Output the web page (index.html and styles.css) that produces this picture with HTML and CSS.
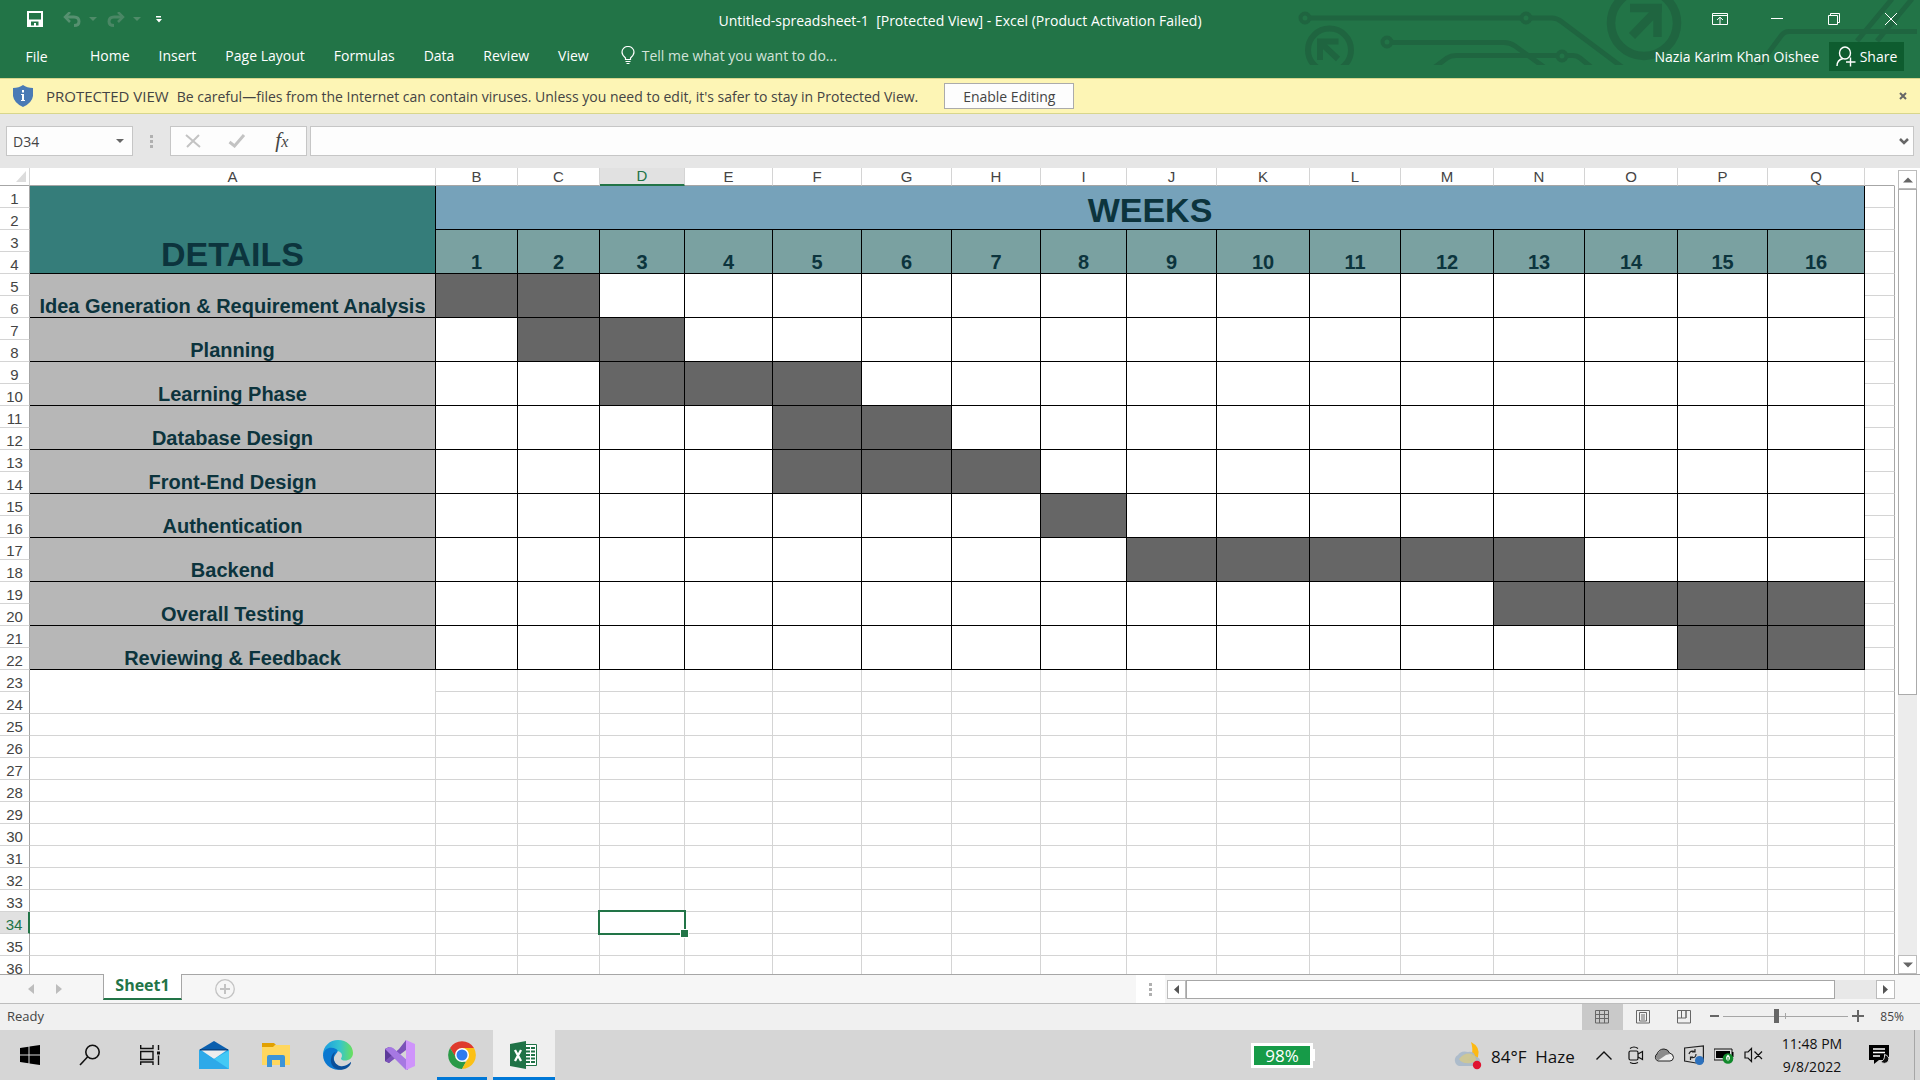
FILE: index.html
```html
<!DOCTYPE html>
<html lang="en">
<head>
<meta charset="utf-8">
<title>Untitled-spreadsheet-1 [Protected View] - Excel</title>
<link rel="stylesheet" href="styles.css">
</head>
<body>
<header class="app-header">
  <svg class="circuit" width="630" height="65" viewBox="0 0 630 65" fill="none" stroke="#1f6540" stroke-width="5" aria-hidden="true">
    <g stroke-width="4">
      <circle cx="15" cy="18" r="4.5"/><circle cx="236" cy="18" r="4.5"/><circle cx="97" cy="42" r="4.5"/><circle cx="272" cy="56" r="4.5"/>
    </g>
    <path d="M20 18H231M241 18H262Q267 18 272 22L332 67M102 42.500H214Q220 42.500 225 46L254 67M145 67L157 58Q161 55.500 166 55.500H267M277 55.500H283Q287 55.500 290 58L301 67M468 67L491 36Q494 31.500 499 31.500H627M567 41L602 -1M587 41L622 -1"/>
    <circle cx="39.500" cy="50" r="21.500" stroke-width="6"/>
    <path d="M27 41.500H48.500M30 39V60M31 43L48 59" stroke-width="6"/>
    <circle cx="354" cy="23" r="33" stroke-width="8.500"/>
    <path d="M340 8H372M367.500 4V37M368 9L342 36" stroke-width="8.500"/>
  </svg>
  <div class="title-row">
    <div class="quick-access">
      <button class="bare save" aria-label="Save"><svg width="16" height="16" viewBox="0 0 16 16"><path fill="#fff" fill-rule="evenodd" d="M0 0H16V16H0ZM2 2V8.500H14V2ZM4 10.500V14.500H7V12H9V14.500H11.500V10.500Z"/></svg></button>
      <button class="bare undo" aria-label="Undo"><svg width="18" height="15" viewBox="0 0 18 15" fill="none" stroke="#569070" stroke-width="3"><path d="M2 5H11Q16 5 16 9.500Q16 13.500 11 13.500"/><path d="M7 0L2 5L7 10" stroke-width="2.500"/></svg></button>
      <span class="caret faded"></span>
      <button class="bare redo" aria-label="Redo"><svg width="18" height="15" viewBox="0 0 18 15" fill="none" stroke="#4a8765" stroke-width="3"><path d="M16 5H7Q2 5 2 9.500Q2 13.500 7 13.500"/><path d="M11 0L16 5L11 10" stroke-width="2.500"/></svg></button>
      <span class="caret faded"></span>
      <button class="bare customize" aria-label="Customize toolbar"><svg width="6" height="7" viewBox="0 0 6 7"><path fill="#fff" d="M0 0H5V1.500H0ZM0 3H6L3 6.500Z"/></svg></button>
    </div>
    <h1 class="doc-title">Untitled-spreadsheet-1&nbsp; [Protected View] - Excel (Product Activation Failed)</h1>
    <div class="window-controls">
      <button class="bare" aria-label="Ribbon options"><svg width="16" height="12" viewBox="0 0 16 12" fill="none" stroke="#fff"><path d="M.5 .5H15.500V11.500H.5ZM.5 2.500H15.500M8 11V4.500M5 7L8 4.200L11 7"/></svg></button>
      <button class="bare" aria-label="Minimize"><svg width="12" height="12" viewBox="0 0 12 12"><path d="M0 5.500H12" stroke="#fff" stroke-width="1"/></svg></button>
      <button class="bare" aria-label="Restore"><svg width="12" height="12" viewBox="0 0 12 12" fill="none" stroke="#fff"><path d="M.5 2.500H9.500V11.500H.5ZM2.500 2.500V.5H11.500V9.500H9.500"/></svg></button>
      <button class="bare" aria-label="Close"><svg width="12" height="12" viewBox="0 0 12 12"><path d="M0 0L12 12M12 0L0 12" stroke="#fff"/></svg></button>
    </div>
  </div>
  <div class="ribbon-row">
    <nav class="ribbon-tabs">
      <button class="bare file">File</button>
      <button class="bare">Home</button>
      <button class="bare">Insert</button>
      <button class="bare">Page Layout</button>
      <button class="bare">Formulas</button>
      <button class="bare">Data</button>
      <button class="bare">Review</button>
      <button class="bare">View</button>
      <button class="bare tell-me"><svg width="14" height="18" viewBox="0 0 14 18" fill="none" stroke="#fff" stroke-width="1.200"><path d="M4.500 13.500V12Q1 9 1 6A6 5.500 0 0 1 13 6Q13 9 9.500 12V13.500ZM4.500 15.500H9.500M5.500 17.500H8.500"/></svg>Tell me what you want to do...</button>
    </nav>
    <div class="account">
      <span>Nazia Karim Khan Oishee</span>
      <button class="bare share"><svg width="20" height="21" viewBox="0 0 20 21" fill="none" stroke="#fff" stroke-width="1.400"><ellipse cx="9" cy="7" rx="5.500" ry="6"/><path d="M7 12.500Q1 14 1 20M10 16H19.500M14.500 11.500V20.500"/></svg>Share</button>
    </div>
  </div>
</header>

<section class="message-bar">
  <svg width="20" height="22" viewBox="0 0 20 22"><path fill="#4a7ab5" d="M10 0Q14 3 20 3V11Q19 18 10 22Q1 18 0 11V3Q6 3 10 0Z"/><path fill="#fff" d="M9 5H11V7.500H9ZM8 9H11V15H12V16H8V15H9V10H8Z"/></svg>
  <span class="message-kind">PROTECTED VIEW</span>
  <span class="message-text">Be careful—files from the Internet can contain viruses. Unless you need to edit, it's safer to stay in Protected View.</span>
  <button class="enable">Enable Editing</button>
  <button class="bare message-close" aria-label="Close message"><svg width="8" height="8" viewBox="0 0 8 8"><path d="M1 1L7 7M7 1L1 7" stroke="#666" stroke-width="2"/></svg></button>
</section>

<section class="formula-bar">
  <div class="name-box"><input type="text" value="D34" aria-label="Name box"><span class="caret"></span></div>
  <span class="grip"></span>
  <div class="formula-actions">
    <button class="bare" aria-label="Cancel"><svg width="16" height="14" viewBox="0 0 16 14"><path d="M1 1L15 13M14 1L2 13" stroke="#c3c3c3" stroke-width="2"/></svg></button>
    <button class="bare" aria-label="Enter"><svg width="18" height="14" viewBox="0 0 18 14"><path d="M1.500 8L6.500 12L16 1" fill="none" stroke="#c3c3c3" stroke-width="3"/></svg></button>
    <button class="bare fx" aria-label="Insert function">f<small>x</small></button>
  </div>
  <div class="formula-field"><input type="text" aria-label="Formula"><svg width="10" height="7" viewBox="0 0 10 7"><path d="M1 1L5 5L9 1" fill="none" stroke="#666" stroke-width="2.500"/></svg></div>
</section>

<main class="sheet-area">
  <div class="grid-view">
    <table class="grid">
      <colgroup id="columns"></colgroup>
      <thead><tr id="letters"></tr></thead>
      <tbody id="rows"></tbody>
    </table>
  </div>
  <div class="vscroll">
    <button class="scroll-btn" aria-label="Scroll up"><svg width="10" height="6" viewBox="0 0 10 6"><path fill="#666" d="M0 5.500L5 .5L10 5.500Z"/></svg></button>
    <div class="vtrack"><div class="vthumb"></div></div>
    <button class="scroll-btn" aria-label="Scroll down"><svg width="10" height="6" viewBox="0 0 10 6"><path fill="#666" d="M0 .5L5 5.500L10 .5Z"/></svg></button>
  </div>
</main>

<section class="tab-strip">
  <div class="tab-nav">
    <button class="bare" aria-label="Previous sheet"><svg width="6" height="10" viewBox="0 0 6 10"><path fill="#bdbdbd" d="M6 0V10L0 5Z"/></svg></button>
    <button class="bare" aria-label="Next sheet"><svg width="6" height="10" viewBox="0 0 6 10"><path fill="#bdbdbd" d="M0 0V10L6 5Z"/></svg></button>
  </div>
  <button class="sheet-tab">Sheet1</button>
  <button class="bare add-sheet" aria-label="New sheet"><svg width="20" height="20" viewBox="0 0 20 20" fill="none" stroke="#c3c3c3"><circle cx="10" cy="10" r="9.300" stroke-width="1.300"/><path d="M10 5V15M5 10H15" stroke-width="2"/></svg></button>
  <div class="splitter"><span class="grip"></span></div>
  <div class="hscroll">
    <button class="scroll-btn" aria-label="Scroll left"><svg width="5" height="9" viewBox="0 0 5 9"><path fill="#555" d="M5 0V9L0 4.500Z"/></svg></button>
    <div class="htrack"><div class="hthumb"></div></div>
    <button class="scroll-btn" aria-label="Scroll right"><svg width="5" height="9" viewBox="0 0 5 9"><path fill="#555" d="M0 0V9L5 4.500Z"/></svg></button>
  </div>
</section>

<section class="status-bar">
  <span class="ready">Ready</span>
  <div class="views">
    <button class="bare active" aria-label="Normal view"><svg width="14" height="14" viewBox="0 0 14 14" fill="none" stroke="#666"><path d="M.5 .5H13.500V13H.5ZM.5 4.500H13.500M.5 8.500H13.500M4.500 .5V13M9.500 .5V13"/></svg></button>
    <button class="bare" aria-label="Page layout view"><svg width="14" height="14" viewBox="0 0 14 14" fill="none" stroke="#666"><path d="M.5 .5H13.500V13H.5ZM3.500 2.500H10.500V11H3.500ZM5 5H9M5 7H9M5 9H9"/></svg></button>
    <button class="bare" aria-label="Page break view"><svg width="14" height="14" viewBox="0 0 14 14" fill="none" stroke="#666"><path d="M.5 .5H13.500V13H.5ZM4.500 .5V8H9V.5M.5 8H4.500M9 8V.5"/></svg></button>
  </div>
  <div class="zoom">
    <button class="bare" aria-label="Zoom out"><svg width="9" height="12" viewBox="0 0 9 12"><path d="M0 6H9" stroke="#666" stroke-width="2"/></svg></button>
    <input type="range" min="0" max="100" value="42" aria-label="Zoom">
    <button class="bare" aria-label="Zoom in"><svg width="12" height="12" viewBox="0 0 12 12"><path d="M0 6H12M6 0V12" stroke="#666" stroke-width="2"/></svg></button>
    <span class="zoom-value">85%</span>
  </div>
</section>

<footer class="taskbar">
  <div class="system-buttons">
    <button class="bare" aria-label="Start"><svg width="20" height="20" viewBox="0 0 20 20"><path d="M0 3L8.500 1.700V9.500H0ZM9.500 1.500L20 0V9.500H9.500ZM0 10.500H8.500V18.300L0 17ZM9.500 10.500H20V20L9.500 18.500Z"/></svg></button>
    <button class="bare" aria-label="Search"><svg width="22" height="22" viewBox="0 0 22 22" fill="none" stroke="#111" stroke-width="1.600"><circle cx="13.500" cy="8" r="6.700"/><path d="M8.700 12.800L1 21"/></svg></button>
    <button class="bare" aria-label="Task view"><svg width="20" height="20" viewBox="0 0 20 20" fill="none" stroke="#111" stroke-width="1.400"><path d="M.7 0V3.500H13V0M.7 6.500H13V14.500H.7ZM.7 20V17H13V20M18.500 0V5M18.500 10.500V20"/><path d="M17 6.500H20V9.500H17Z" fill="#111" stroke="none"/></svg></button>
  </div>
  <div class="apps">
    <button class="bare app" aria-label="Mail"><svg width="30" height="30" viewBox="0 0 30 30"><path fill="#0b5fae" d="M0 10L15 1L30 10V14H0Z"/><path fill="#2da9e9" d="M0 10H30V29H0Z"/><path fill="#eee" d="M2 10H28L15 19Z"/><path fill="#0a4584" d="M1 9H29V10.500H1Z"/><path fill="#2da9e9" d="M0 10.500L15 19L30 28.500V29H0Z"/><path fill="#43c9f5" d="M30 10.500V29L15 19Z"/></svg></button>
    <button class="bare app" aria-label="File Explorer"><svg width="28" height="24" viewBox="0 0 28 24"><path fill="#e2a000" d="M0 0H12L14 2V6H0Z"/><path fill="#ffd75f" d="M0 4H11L13 2H28V22H0Z"/><path fill="#3c94d8" d="M5 14Q5 12 7 12H21Q23 12 23 14V24H18V17H10V24H5Z"/></svg></button>
    <button class="bare app" aria-label="Edge"><svg width="30" height="30" viewBox="0 0 30 30"><defs><linearGradient id="edge-top" x1="0" x2="1"><stop offset="0" stop-color="#1a9be0"/><stop offset=".55" stop-color="#35c4cf"/><stop offset="1" stop-color="#6be05a"/></linearGradient></defs><path fill="url(#edge-top)" d="M0 15C0 6 7 0 15 0C24 0 30 6 30 13C30 18 26 20.500 22 20.500C18 20.500 17.500 18.500 18.500 17.500C20 15 18 11 14 11C8 8 3 10 0 15Z"/><path fill="#0b78d0" d="M0 15C1 8 8 6 13 9C18 12 10 14 11 20C12 25 17 28 20 29C10 32 0 25 0 15Z"/><path fill="#0c4f99" d="M12.500 12C9 16 10 24 17 26C22 27 26 24 27.500 22C29 22 27 28 20 29.500C12 31 7 25 8 19C8.500 15 10.500 12.500 12.500 12Z"/></svg></button>
    <button class="bare app" aria-label="Visual Studio"><svg width="30" height="30" viewBox="0 0 30 30"><path fill="#5c3a99" d="M0 9L4 7L11 15L4 23L0 21Z"/><path fill="#7a52b8" d="M21 0V10L4 23L0 21L14 9Z"/><path fill="#a678e2" d="M4 7L21 30L21 20L8 8Z"/><path fill="#a678e2" d="M0 9L4 7Q7 7 9 9L23 21V30Q21 30 19 28Z"/><path fill="#cf94fb" d="M21 0L30 4V26L21 30Z"/></svg></button>
    <button class="bare app running" aria-label="Chrome"><svg width="28" height="28" viewBox="0 0 28 28"><path fill="#df3a2d" d="M2 7A14 14 0 0 1 26 7H14L8 17Z"/><path fill="#2b9a47" d="M2 7L9 18L14 20L18 21L14 28A14 14 0 0 1 2 7Z"/><path fill="#fbc016" d="M14 7H26A14 14 0 0 1 14 28L20 17Z"/><circle cx="14" cy="14" r="7" fill="#fff"/><circle cx="14" cy="14" r="5.500" fill="#2f7bee"/></svg></button>
    <button class="bare app running current" aria-label="Excel"><svg width="28" height="28" viewBox="0 0 28 28"><path fill="#fff" stroke="#1f7246" d="M14 3.500H26.500V24.500H14Z"/><path fill="#1f7246" d="M16 6H20V8H16ZM21 6H25V8H21ZM16 9.500H20V11.500H16ZM21 9.500H25V11.500H21ZM16 13H20V15H16ZM21 13H25V15H21ZM16 16.500H20V18.500H16ZM21 16.500H25V18.500H21ZM16 20H20V22H16ZM21 20H25V22H21Z"/><path fill="#1f7246" d="M0 3L16 0V28L0 25Z"/><path d="M5 9L11 20M11 9L5 20" stroke="#fff" stroke-width="2.300"/></svg></button>
  </div>
  <div class="battery-meter"><span>98%</span></div>
  <div class="tray">
    <button class="bare weather"><svg width="30" height="28" viewBox="0 0 30 28"><path fill="#fdb913" d="M18 0Q28 5 25 15Q22 22 14 18Q22 13 18 0Z"/><path fill="#a9b9ca" opacity=".9" d="M6 24A6 6 0 0 1 5 13Q8 8 15 10Q21 9 22 14Q28 16 27 20Q26 24 22 24Z"/><path fill="#d5c98a" opacity=".8" d="M6 17Q14 8 22 14Q25 20 18 21Q8 22 6 17Z"/><circle cx="24" cy="23" r="4.200" fill="#e0142f"/></svg>84°F&nbsp; Haze</button>
    <div class="tray-icons">
      <button class="bare overflow" aria-label="Show hidden icons"><svg width="16" height="9" viewBox="0 0 16 9"><path d="M.5 8.500L8 1L15.500 8.500" fill="none" stroke="#111" stroke-width="1.400"/></svg></button>
      <button class="bare" aria-label="Meet now"><svg width="16" height="18" viewBox="0 0 16 18" fill="none" stroke="#111" stroke-width="1.200"><rect x="1" y="5" width="9" height="9" rx="1.500"/><path d="M10 8L14.500 5.500V13.500L10 11M2 2.500Q6 -.5 10 2.500M2 16.500Q6 18.500 10 16.500"/></svg></button>
      <button class="bare" aria-label="OneDrive"><svg width="20" height="14" viewBox="0 0 20 14"><path fill="#eee" d="M4 13A4 4 0 0 1 3 6Q5 1 10 1Q14 1 15.500 5Q19.500 6 19.500 9.500Q19 13 16 13Z"/><path fill="#8c8c8c" d="M2 10Q0 6 4 5.500Q6 1 10 1Q14 1 16 6L12 7L4 12.500Z"/><path fill="none" stroke="#222" d="M4 13A4 4 0 0 1 3 6Q5 1 10 1Q14 1 15.500 5Q19.500 6 19.500 9.500Q19 13 16 13Z"/></svg></button>
      <button class="bare" aria-label="Updates"><svg width="20" height="20" viewBox="0 0 20 20" fill="none" stroke="#222" stroke-width="1.200"><path d="M.6 3L19.400 .8V16L12 18L.6 16Z"/><path d="M5 9Q6 5 11 6.500M11 4V7H8M12 9Q12 13.500 7 12.500M6.500 15V12H9"/><circle cx="15.500" cy="15.500" r="4.500" fill="#2d71bd" stroke="none"/></svg></button>
      <button class="bare" aria-label="Battery"><svg width="20" height="18" viewBox="0 0 20 18"><path d="M0 3H18V14H0Z" fill="#ddd" stroke="#111"/><path d="M2 5H16V12H2Z"/><path d="M18 6H19.500V11H18Z"/><circle cx="14" cy="12.500" r="5.300" fill="#11892b"/><path d="M14 8.500Q18 12 14 15.500Q10 12 14 8.500Z" fill="#fff"/><path d="M14 11V17" stroke="#11892b"/></svg></button>
      <button class="bare" aria-label="Volume muted"><svg width="19" height="16" viewBox="0 0 19 16" fill="none" stroke="#111" stroke-width="1.200"><path d="M1 5H4L7.500 1.500V14.500L4 11H1ZM10.500 4.500L18 12M18 4.500L10.500 12"/></svg></button>
    </div>
    <button class="bare clock"><span>11:48 PM</span><span>9/8/2022</span></button>
    <button class="bare notifications" aria-label="Notifications"><svg width="21" height="20" viewBox="0 0 21 20"><path d="M0 0H20V15H10L5 19V15H0Z"/><path d="M4 4H16M4 7.500H16M4 11H11" stroke="#fff" stroke-width="1.500"/><path fill="#111" stroke="#ddd" d="M15.500 9.500Q21 11 19.500 16Q16 20.500 11.500 16.500Q16 15.500 15.500 9.500Z"/></svg></button>
    <span class="show-desktop"></span>
  </div>
</footer>
<script src="grid.js"></script>
</body>
</html>
```

FILE: styles.css
```css
* { box-sizing: border-box; }

body {
  margin: 0;
  height: 100vh;
  display: flex;
  flex-direction: column;
  overflow: hidden;
  background: #e6e6e6;
  color: #444;
  font-family: "Open Sans", "Noto Sans", sans-serif;
  font-size: 14px;
}

button, input { font: inherit; color: inherit; }
svg { display: block; flex: none; }

.bare {
  display: flex;
  align-items: center;
  justify-content: center;
  margin: 0;
  padding: 0;
  border: 0;
  background: none;
}

.caret {
  flex: none;
  border: 4px solid transparent;
  border-top-color: #666;
  border-bottom-width: 0;
}
.caret.faded { border-top-color: #4f8b69; }

.grip {
  width: 3px;
  height: 13px;
  background: repeating-linear-gradient(#b0b0b0 0 3px, transparent 3px 5px);
}

/* Title bar and ribbon */
.app-header {
  position: relative;
  flex: none;
  height: 78px;
  background: #227447;
  color: #fff;
}
.circuit { position: absolute; top: 0; right: 0; }
.title-row {
  position: relative;
  display: grid;
  grid-template-columns: 1fr auto 1fr;
  align-items: center;
  height: 38px;
}
.quick-access { display: flex; align-items: center; padding-left: 27px; }
.undo { margin-left: 20px; margin-right: 8px; }
.redo { margin-left: 10px; margin-right: 8px; }
.customize { margin-left: 15px; }
.doc-title { margin: 0; font-size: 14px; font-weight: 400; padding-top: 2px; }
.window-controls { display: flex; justify-content: flex-end; padding-right: 1px; }
.window-controls .bare { width: 57px; height: 38px; }
.ribbon-row {
  position: relative;
  display: flex;
  justify-content: space-between;
  align-items: center;
  height: 36px;
}
.ribbon-tabs { display: flex; align-items: center; gap: 29px; padding-bottom: 2px; }
.ribbon-tabs .file { width: 73px; margin-right: -12px; padding-top: 2px; }
.tell-me { gap: 7px; margin-left: 3px; color: #d3e3da; }
.account { display: flex; align-items: center; gap: 10px; padding-right: 16px; }
.share { gap: 4px; width: 75px; height: 29px; background: #0e5c2f; }

/* Protected view message */
.message-bar {
  flex: none;
  display: flex;
  align-items: center;
  height: 36px;
  padding: 0 13px;
  border-top: 1px solid #d8d68c;
  border-bottom: 1px solid #d8d68c;
  background: #fdf5b5;
}
.message-kind { margin-left: 13px; font-size: 15px; }
.message-text { margin-left: 8px; }
.enable {
  width: 130px;
  height: 26px;
  margin-left: 26px;
  padding: 0;
  border: 1px solid #ababab;
  background: #fdfdfd;
}
.message-close { margin-left: auto; }

/* Formula bar */
.formula-bar {
  flex: none;
  display: flex;
  align-items: center;
  height: 54px;
  padding: 0 6px;
}
.name-box, .formula-actions, .formula-field {
  display: flex;
  align-items: center;
  height: 30px;
  border: 1px solid #c6c6c6;
  background: #fdfdfd;
}
.name-box { width: 127px; padding-right: 8px; }
.name-box input, .formula-field input {
  flex: 1;
  min-width: 0;
  padding: 0 6px;
  border: 0;
  background: none;
}
.formula-bar .grip { margin: 0 17px; }
.formula-actions { width: 137px; justify-content: space-around; margin-right: 3px; padding-right: 2px; }
.formula-actions .bare { width: 40px; }
.formula-actions .fx {
  align-items: baseline;
  font-family: "Liberation Serif", serif;
  font-style: italic;
  font-size: 21px;
  line-height: 24px;
}
.fx small { font-size: 16px; }
.formula-field { flex: 1; padding-right: 4px; }

/* Worksheet */
.sheet-area {
  flex: 1;
  min-height: 0;
  display: flex;
  background: #fff;
  font-family: "Liberation Sans", Arial, sans-serif;
}
.grid-view { flex: 1; min-width: 0; overflow: hidden; }
.grid {
  width: 100%;
  table-layout: fixed;
  border-collapse: separate;
  border-spacing: 0;
}
.grid th, .grid td {
  height: 22px;
  padding: 0;
  border-right: 1px solid #d4d4d4;
  border-bottom: 1px solid #d4d4d4;
  text-align: center;
  vertical-align: bottom;
  line-height: normal;
  white-space: nowrap;
}
.grid th { font-weight: 400; font-size: 15px; color: #444; }
.grid thead th { height: 18px; line-height: 17px; border-bottom-color: #a6a6a6; }
.grid thead th:last-child { border-right-color: transparent; }
.grid tbody th { border-right-color: #a6a6a6; }
.grid td:last-child { border-right-color: #a6a6a6; }
.corner svg { margin: 0 3px 3px auto; }
.grid thead .selected {
  line-height: 16px;
  background: #e1e1e1;
  color: #227447;
  border-bottom: 2px solid #227447;
}
.grid tbody .selected {
  background: #e1e1e1;
  color: #227447;
  border-right: 2px solid #227447;
}
.grid .chart {
  border-color: #000;
  color: #0c343d;
  font-weight: 700;
  font-size: 20px;
  line-height: 21px;
}
.grid .details, .grid .weeks { font-size: 34px; line-height: 38px; }
.grid .details { background: #357d7a; }
.grid .weeks { background: #76a2ba; }
.grid .week { background: #7aa1a1; }
.grid .task { background: #b7b7b7; }
.grid .filled { background: #666; }
.grid .active { position: relative; }
.cursor {
  position: absolute;
  inset: -2px;
  border: 2px solid #227447;
}
.cursor::after {
  content: "";
  position: absolute;
  right: -5px;
  bottom: -5px;
  width: 7px;
  height: 7px;
  border: 1px solid #fff;
  background: #227447;
}

.scroll-btn {
  flex: none;
  display: flex;
  align-items: center;
  justify-content: center;
  width: 19px;
  height: 19px;
  padding: 0;
  border: 1px solid #bcbcbc;
  background: #fff;
}
.vscroll {
  flex: none;
  width: 25px;
  display: flex;
  flex-direction: column;
  align-items: center;
  padding-top: 2px;
}
.vtrack { flex: 1; width: 19px; background: #ececec; }
.vthumb { height: 66%; border: 1px solid #ababab; background: #fff; }

/* Sheet tabs */
.tab-strip {
  flex: none;
  display: flex;
  height: 29px;
  border-top: 1px solid #a6a6a6;
  background: #f6f6f6;
}
.tab-nav { width: 103px; display: flex; gap: 22px; padding-left: 28px; }
.sheet-tab {
  width: 79px;
  height: 26px;
  margin-top: -1px;
  padding: 0 0 2px;
  border: solid #a6a6a6;
  border-width: 0 1px 2px;
  border-bottom-color: #227447;
  background: #fff;
  color: #227447;
  font-weight: 700;
  font-size: 16px;
  line-height: 20px;
}
.add-sheet { margin-left: 33px; }
.splitter {
  width: 29px;
  display: flex;
  align-items: center;
  justify-content: center;
  margin-left: auto;
  background: #fff;
}
.hscroll {
  width: 755px;
  display: flex;
  align-items: center;
  padding: 0 25px 0 2px;
}
.htrack { flex: 1; height: 19px; background: #e8e8e8; }
.hthumb { width: 94%; height: 19px; border: 1px solid #a6a6a6; background: #fff; }

/* Status bar */
.status-bar {
  flex: none;
  display: flex;
  align-items: center;
  height: 27px;
  border-top: 1px solid #bdbdbd;
  background: #f0f0f0;
  font-size: 12px;
}
.ready { padding-left: 7px; padding-bottom: 2px; font-size: 13px; }
.views { display: flex; align-self: stretch; margin-left: auto; }
.views .bare { width: 41px; padding: 0 2px 1px 0; }
.views .active { background: #c9c9c9; }
.zoom { display: flex; align-items: center; gap: 4px; padding: 0 16px 2px 5px; }
.zoom input {
  appearance: none;
  width: 125px;
  height: 14px;
  margin: 0;
  background:
    linear-gradient(#a6a6a6, #a6a6a6) center / 1px 6px no-repeat,
    linear-gradient(#a6a6a6, #a6a6a6) center / 100% 1px no-repeat;
}
.zoom input::-webkit-slider-thumb {
  appearance: none;
  width: 5px;
  height: 14px;
  background: #666;
}
.zoom-value { margin-left: 12px; }

/* Taskbar */
.taskbar {
  flex: none;
  display: flex;
  height: 50px;
  background: #d6d6d6;
  color: #111;
}
.system-buttons, .apps, .tray, .tray-icons { display: flex; }
.system-buttons .bare { width: 60px; }
.apps { margin-left: 3px; }
.app { width: 62px; }
.app.running { position: relative; }
.app.running::after {
  content: "";
  position: absolute;
  left: 6px;
  right: 6px;
  bottom: 0;
  height: 3px;
  background: #0078d7;
}
.app.current { background: #efefef; }
.app.current::after { left: 0; right: 0; }
.battery-meter {
  align-self: center;
  display: flex;
  margin-left: auto;
}
.battery-meter span {
  width: 62px;
  border: 3px solid #fff;
  background: #169b48;
  color: #fff;
  font-size: 17px;
  line-height: 19px;
  text-align: center;
}
.battery-meter::after {
  content: "";
  align-self: center;
  width: 2px;
  height: 12px;
  background: #fff;
}
.tray { margin-left: 138px; align-items: center; }
.weather { gap: 8px; width: 124px; justify-content: flex-start; font-size: 17px; padding-top: 2px; }
.tray-icons { align-items: center; gap: 10px; margin-left: 19px; }
.overflow { margin-right: 6px; }
.clock { flex-direction: column; gap: 4px; margin-left: 19px; width: 60px; line-height: 19px; white-space: nowrap; }
.notifications { margin-left: 27px; }
.show-desktop { align-self: stretch; width: 6px; margin-left: 24px; border-left: 1px solid #a6a6a6; }
```

FILE: grid.js
```js
const widths = [30, 406, 82, 82, 85, 88, 89, 90, 89, 86, 90, 93, 91, 93, 91, 93, 90, 97];
const letters = "ABCDEFGHIJKLMNOPQ".split("");
const ROW_COUNT = 36;
const ACTIVE = { column: "D", row: 34 };

// Each task covers two sheet rows; from/to are week numbers.
const tasks = [
  { name: "Idea Generation & Requirement Analysis", from: 1, to: 2 },
  { name: "Planning", from: 2, to: 3 },
  { name: "Learning Phase", from: 3, to: 5 },
  { name: "Database Design", from: 5, to: 6 },
  { name: "Front-End Design", from: 5, to: 7 },
  { name: "Authentication", from: 8, to: 8 },
  { name: "Backend", from: 9, to: 13 },
  { name: "Overall Testing", from: 13, to: 16 },
  { name: "Reviewing & Feedback", from: 15, to: 16 }
];

function cell(row, className, text, rowSpan, colSpan) {
  const td = row.insertCell();
  if (className) td.className = className;
  if (text) td.textContent = text;
  if (rowSpan) td.rowSpan = rowSpan;
  if (colSpan) td.colSpan = colSpan;
  return td;
}

function header(row, text, selected) {
  const th = document.createElement("th");
  th.textContent = text;
  if (selected) th.className = "selected";
  row.append(th);
  return th;
}

const columns = document.getElementById("columns");
for (const width of widths) {
  const col = document.createElement("col");
  col.style.width = width + "px";
  columns.append(col);
}
columns.append(document.createElement("col"));

const head = document.getElementById("letters");
const corner = header(head, "", false);
corner.className = "corner";
corner.innerHTML = '<svg width="10" height="11" viewBox="0 0 10 11"><path fill="#dcdcdc" d="M10 0V11H0Z"/></svg>';
letters.forEach(letter => header(head, letter, letter === ACTIVE.column));
header(head, "", false);

const body = document.getElementById("rows");
for (let n = 1; n <= ROW_COUNT; n++) {
  const row = body.insertRow();
  header(row, n, n === ACTIVE.row);
  if (n === 1) {
    cell(row, "chart details", "DETAILS", 4);
    cell(row, "chart weeks", "WEEKS", 2, 16);
  } else if (n === 3) {
    for (let week = 1; week <= 16; week++) cell(row, "chart week", String(week), 2);
  } else if (n >= 5 && n <= 22 && n % 2 === 1) {
    const task = tasks[(n - 5) / 2];
    cell(row, "chart task", task.name, 2);
    for (let week = 1; week <= 16; week++) {
      cell(row, week >= task.from && week <= task.to ? "chart filled" : "chart", "", 2);
    }
  } else if (n > 22) {
    if (n === 23) cell(row, "", "", 2);
    else if (n > 24) cell(row);
    for (const letter of letters.slice(1)) {
      const td = cell(row);
      if (n === ACTIVE.row && letter === ACTIVE.column) {
        td.className = "active";
        td.innerHTML = '<span class="cursor"></span>';
      }
    }
  }
  cell(row);
}
```
